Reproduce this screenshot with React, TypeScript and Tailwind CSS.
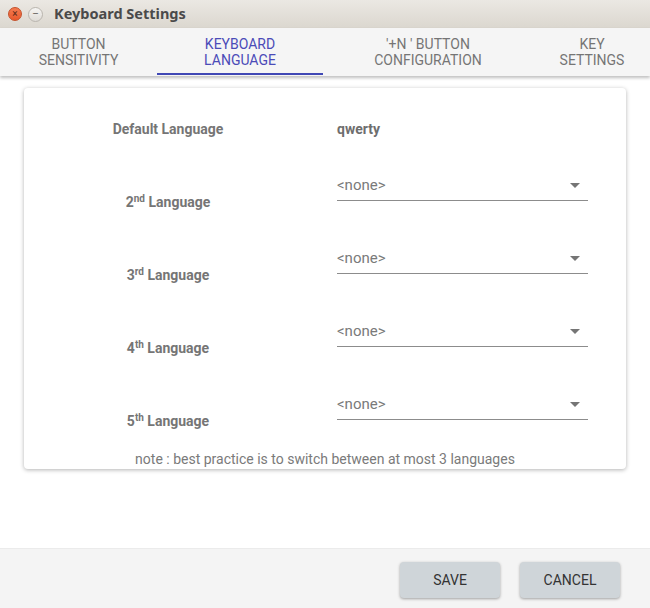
const tabs = [
  { label: ["BUTTON", "SENSITIVITY"], width: "w-[157px]", active: false },
  { label: ["KEYBOARD", "LANGUAGE"], width: "w-[166px]", active: true },
  { label: ["'+N ' BUTTON", "CONFIGURATION"], width: "w-[210px]", active: false },
  { label: ["KEY", "SETTINGS"], width: "w-[118px]", active: false },
];

const extraLanguages = [
  { num: "2", suffix: "nd" },
  { num: "3", suffix: "rd" },
  { num: "4", suffix: "th" },
  { num: "5", suffix: "th" },
];

function TitleBar() {
  return (
    <div className="flex h-[28px] items-center bg-gradient-to-b from-[#ebe8e3] to-[#dbd7cf] pl-[8px]">
      {/* window controls */}
      <div className="flex h-[14px] w-[14px] items-center justify-center rounded-full border border-[#c4502a] bg-gradient-to-b from-[#f47a4f] to-[#e9592c] text-[10px] leading-none text-[#5a2a18]">
        ×
      </div>
      <div className="ml-[6px] flex h-[15px] w-[15px] items-center justify-center rounded-full border border-[#b9b5ae] bg-gradient-to-b from-[#f6f5f3] to-[#dedbd6] text-[10px] leading-none text-[#6b6864]">
        –
      </div>
      <span className="ml-[11px] font-['Noto_Sans',sans-serif] text-[14.5px] font-bold text-[#4a4a4a]">
        Keyboard Settings
      </span>
    </div>
  );
}

function TabBar() {
  return (
    <div className="relative z-10 flex h-[48px] overflow-hidden bg-[#f5f5f5] shadow-[0_2px_3px_rgba(0,0,0,0.25)]">
      {tabs.map((tab) => (
        <div
          key={tab.label.join(" ")}
          className={`relative flex shrink-0 flex-col items-center pt-[8px] text-[14px] leading-[16px] ${tab.width} ${
            tab.active ? "text-[#4b4bb8]" : "text-[#757575]"
          }`}
        >
          <span>{tab.label[0]}</span>
          <span>{tab.label[1]}</span>
          {tab.active && (
            <div className="absolute bottom-[1px] left-0 right-0 h-[2px] bg-[#4048b5]" />
          )}
        </div>
      ))}
    </div>
  );
}

function NoneSelect() {
  return (
    <div className="ml-[25px] flex h-[31px] w-[251px] items-start justify-between border-b border-[#8c8c8c] pt-[5px]">
      <span className="text-[15px] leading-[20px] text-[#7a7a7a]">&lt;none&gt;</span>
      <svg width="10" height="5" viewBox="0 0 10 5" className="mr-[8px] mt-[8px]">
        <path d="M0 0h10L5 5z" fill="#757575" />
      </svg>
    </div>
  );
}

export default function App() {
  return (
    <div className="flex h-[608px] w-[650px] flex-col bg-white font-['Roboto',sans-serif]">
      <TitleBar />
      <TabBar />

      <div className="flex-1 px-[24px] pt-[12px]">
        <div className="flex flex-col rounded-[4px] bg-white pt-[32px] shadow-[0_1px_4px_rgba(0,0,0,0.3)]">
          {/* default language */}
          <div className="flex h-[18px] items-center">
            <span className="w-[288px] text-center text-[14px] font-bold text-[#757575]">
              Default Language
            </span>
            <span className="ml-[25px] text-[14px] font-bold text-[#6e6e6e]">qwerty</span>
          </div>

          {extraLanguages.map((lang) => (
            <div key={lang.num} className="mt-[32px] flex h-[41px] items-start">
              <span className="mt-[22px] w-[288px] text-center text-[14px] font-bold leading-[20px] text-[#757575]">
                {lang.num}
                <sup className="text-[10px]">{lang.suffix}</sup> Language
              </span>
              <NoneSelect />
            </div>
          ))}

          <p className="mt-[19px] text-center text-[14px] leading-[20px] text-[#7a7a7a]">
            note : best practice is to switch between at most 3 languages
          </p>
        </div>
      </div>

      <div className="flex h-[60px] items-start justify-end gap-[20px] border-t border-[#ebebeb] bg-[#f4f4f4] pr-[30px] pt-[13px]">
        <button className="h-[36px] w-[100px] rounded-[4px] bg-[#cfd5d9] text-[14px] text-[#333] shadow-[0_1px_3px_rgba(0,0,0,0.35)]">
          SAVE
        </button>
        <button className="h-[36px] w-[100px] rounded-[4px] bg-[#cfd5d9] text-[14px] text-[#333] shadow-[0_1px_3px_rgba(0,0,0,0.35)]">
          CANCEL
        </button>
      </div>
    </div>
  );
}
